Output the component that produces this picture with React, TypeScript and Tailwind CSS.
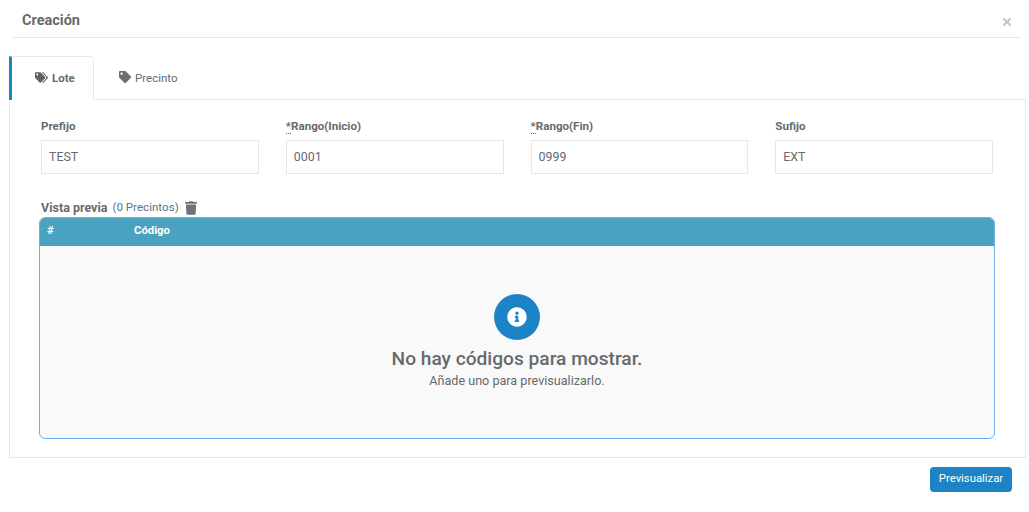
import { FaInfoCircle, FaTag, FaTags, FaTimes, FaTrash } from "react-icons/fa"

const fields = [
  { label: "Prefijo", value: "TEST" },
  { label: "Rango(Inicio)", value: "0001", required: true },
  { label: "Rango(Fin)", value: "0999", required: true },
  { label: "Sufijo", value: "EXT" },
]

export default function App() {
  return (
    <div className="h-[512px] w-[1029px] overflow-hidden bg-white font-['Roboto',sans-serif] text-[#676a6c]">
      {/* Header */}
      <div className="mx-[13px] mr-2 flex h-[38px] items-center justify-between border-b border-[#e5e5e5] pl-[9px] pr-[9px]">
        <h4 className="mt-1 text-[14.5px] font-bold text-[#676a6c]">Creación</h4>
        <FaTimes className="-mr-px mt-[6px] h-3 w-3 text-[#c8c8c8]" />
      </div>

      <div className="ml-[9px] mr-[3px] mt-[18px]">
        {/* Tabs */}
        <div className="flex h-[44px] items-stretch">
          <div className="z-10 flex h-[44px] w-[85px] items-center gap-[4px] rounded-tr-sm border-l-[3px] border-r border-t border-l-[#1a87b9] border-r-[#e7eaec] border-t-[#e7eaec] bg-white pl-[23px] text-[11.5px] font-bold">
            <FaTags className="mb-[2px] h-[13px] w-[13px] text-[#5e6166]" />
            <span className="mt-px">Lote</span>
          </div>
          <div className="flex items-center gap-[4px] pl-[25px] text-[11.5px]">
            <FaTag className="mb-[2px] h-3 w-3 text-[#6c7075]" />
            <span className="mt-px">Precinto</span>
          </div>
        </div>

        {/* Panel */}
        <div className="-mt-px h-[359px] border border-[#e7eaec] px-[31px] pt-5">
          <div className="grid w-[952px] grid-cols-4 gap-x-[27px]">
            {fields.map((field) => (
              <div key={field.label}>
                <label className="block h-[20px] text-[11.6px] font-bold leading-[13px]">
                  {field.required && <span className="border-b border-dotted border-[#676a6c]">*</span>}
                  {field.label}
                </label>
                <input
                  readOnly
                  value={field.value}
                  className="h-[34px] w-full border border-[#e5e6e7] pb-[2px] pl-[7px] pr-2 text-[12.4px] text-[#676a6c] outline-none"
                />
              </div>
            ))}
          </div>

          <div className="mt-[25px] flex h-[18px] items-center gap-[5px]">
            <span className="text-[12.5px] font-bold">Vista previa</span>
            <span className="text-[11.6px] text-[#5d7389]">(0 Precintos)</span>
            <FaTrash className="ml-px h-[14px] w-[12px] text-[#6b7280]" />
          </div>

          {/* Table */}
          <div className="-ml-[2px] h-[222px] w-[956px] overflow-hidden rounded-md border border-[#6fb1ec] bg-[#f9f9f9]">
            <div className="flex h-[28px] items-center bg-[#49a3c0] pb-[2px] text-[11.3px] font-bold text-white">
              <span className="w-[94px] pl-[7px]">#</span>
              <span>Código</span>
            </div>
            <div className="flex flex-col items-center pt-[48px]">
              <div className="flex h-[46px] w-[46px] items-center justify-center rounded-full bg-[#1c84c6]">
                <FaInfoCircle className="h-5 w-5 text-white" />
              </div>
              <h3 className="mt-[5px] text-[19.15px] font-medium leading-[28px]">No hay códigos para mostrar.</h3>
              <p className="text-[12.6px] leading-[16px]">Añade uno para previsualizarlo.</p>
            </div>
          </div>
        </div>

        {/* Footer */}
        <div className="mr-[14px] mt-[9px] flex justify-end">
          <button className="h-[25px] w-[82px] rounded-sm bg-[#1c84c6] text-[11.3px] text-white">Previsualizar</button>
        </div>
      </div>
    </div>
  )
}
